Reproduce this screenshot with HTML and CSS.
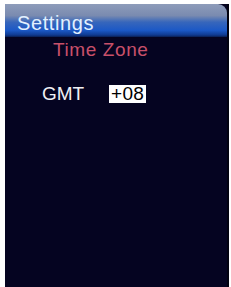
FILE: index.html
```html
<!DOCTYPE html>
<html>
<head>
<meta charset="utf-8">
<link rel="stylesheet" href="styles.css">
</head>
<body>
<div class="screen">
  <div class="header"><span class="title">Settings</span></div>
  <div class="content">
    <div class="subtitle">Time Zone</div>
    <div class="row">
      <span class="label">GMT</span>
      <span class="value">+08</span>
    </div>
  </div>
</div>
</body>
</html>
```
FILE: styles.css
```css
html, body {
  margin: 0;
  padding: 0;
  background: #ffffff;
  width: 231px;
  height: 287px;
  overflow: hidden;
}
.screen {
  box-sizing: border-box;
  margin: 4px 0 0 5px;
  width: 224px;
  height: 283px;
  background: #050421;
  border-right: 2px solid #020210;
  font-family: "Liberation Sans", Arial, sans-serif;
  display: flex;
  flex-direction: column;
}
.header {
  box-sizing: border-box;
  height: 33px;
  background: linear-gradient(180deg, #8e9cba 0%, #7a8bb0 35%, #3766bb 55%, #1b58c6 80%, #0f3a90 94%, #0a1e50 100%);
  border-top-right-radius: 9px;
  display: flex;
  align-items: flex-end;
  padding: 0 0 4px 12px;
}
.title {
  color: #e2f0ff;
  font-size: 20px;
  line-height: 20px;
  letter-spacing: 0.6px;
}
.content {
  display: flex;
  flex-direction: column;
}
.subtitle {
  color: #c8506a;
  font-size: 19px;
  line-height: 20px;
  padding-left: 48px;
  margin-top: 3px;
  letter-spacing: 0.6px;
}
.row {
  display: flex;
  align-items: center;
  margin-top: 24px;
  padding-left: 37px;
}
.label {
  color: #f0f0f4;
  font-size: 19px;
  line-height: 20px;
  width: 67px;
}
.value {
  background: #ffffff;
  color: #000000;
  font-size: 19px;
  padding: 0 2px;
  line-height: 18px;
  letter-spacing: 0.3px;
}
```
